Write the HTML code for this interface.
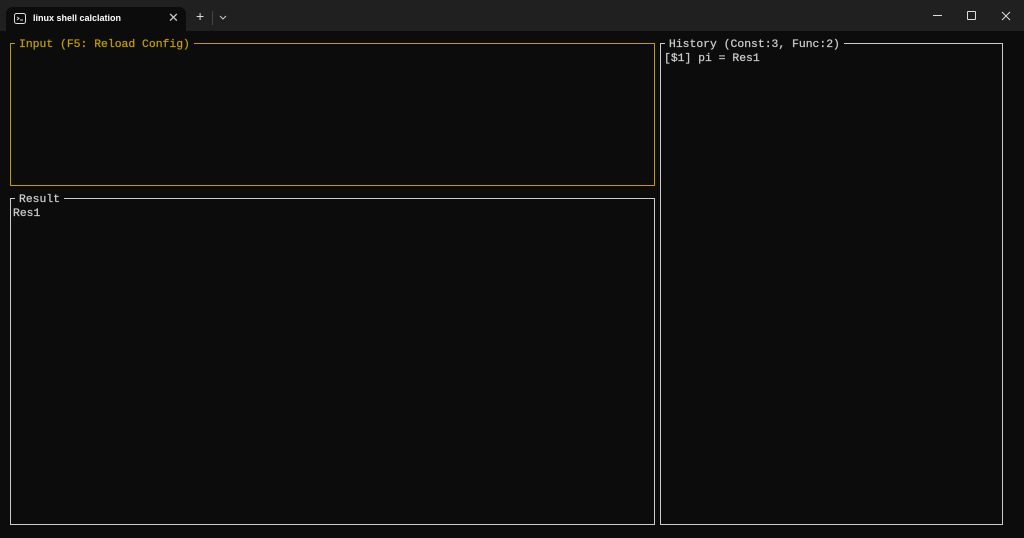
<!DOCTYPE html>
<html><head><style>
*{margin:0;padding:0;box-sizing:border-box}
body{width:1024px;height:538px;background:#0c0c0c;position:relative;overflow:hidden;font-family:"Liberation Mono",monospace;font-size:11.4px}
#tb{position:absolute;left:0;top:0;width:1024px;height:31px;background:#202020}
#tab{position:absolute;left:6px;top:7px;width:180px;height:24px;background:#0c0c0c;border-radius:7px 7px 0 0;font-family:"Liberation Sans",sans-serif;font-size:9px;color:#fff;font-weight:bold}
.box{position:absolute;border:1.5px solid #cccccc}
.t{position:absolute;background:#0c0c0c;padding:0 4px;white-space:pre;line-height:14px;-webkit-text-stroke:0.25px currentColor}
.x{position:absolute;color:#cccccc;white-space:pre;line-height:14px;-webkit-text-stroke:0.25px currentColor}
</style></head><body>
<div id="tb">
 <div id="tab">
  <svg style="position:absolute;left:8px;top:6px" width="12" height="11" viewBox="0 0 12 11"><rect x="0.5" y="0.5" width="11" height="10" rx="2" fill="none" stroke="#ddd"/><path d="M3 4l2 1.5-2 1.5M6 7h3" stroke="#ddd" fill="none"/></svg>
  <span style="position:absolute;left:27px;top:6px">linux shell calclation</span>
  <span style="position:absolute;left:162px;top:3px;font-size:13px;font-weight:normal;color:#ccc">✕</span>
 </div>
 <span style="position:absolute;left:196px;top:8px;color:#ddd;font-family:'Liberation Sans';font-size:14px">+</span>
 <div style="position:absolute;left:212px;top:11px;width:1px;height:14px;background:#444"></div>
 <svg style="position:absolute;left:219px;top:15px" width="8" height="5"><path d="M1 1l3 3 3-3" stroke="#ccc" fill="none"/></svg>
 <div style="position:absolute;left:933px;top:15px;width:9px;height:1px;background:#ddd"></div>
 <div style="position:absolute;left:967px;top:11px;width:9px;height:9px;border:1px solid #ddd;border-radius:1px"></div>
 <svg style="position:absolute;left:1001px;top:11px" width="10" height="10"><path d="M1 1l8 8M9 1l-8 8" stroke="#ddd"/></svg>
</div>
<div class="box" style="left:10px;top:43px;width:645px;height:143px;border-color:#c19c00"></div>
<div class="t" style="left:15px;top:38px;color:#c19c00">Input (F5: Reload Config)</div>
<div class="box" style="left:10px;top:198px;width:645px;height:327px"></div>
<div class="t" style="left:15px;top:193px;color:#cccccc">Result</div>
<div class="x" style="left:13px;top:207px">Res1</div>
<div class="box" style="left:660px;top:43px;width:343px;height:482px"></div>
<div class="t" style="left:665px;top:38px;color:#cccccc">History (Const:3, Func:2)</div>
<div class="x" style="left:664px;top:52px">[$1] pi = Res1</div>
</body></html>
